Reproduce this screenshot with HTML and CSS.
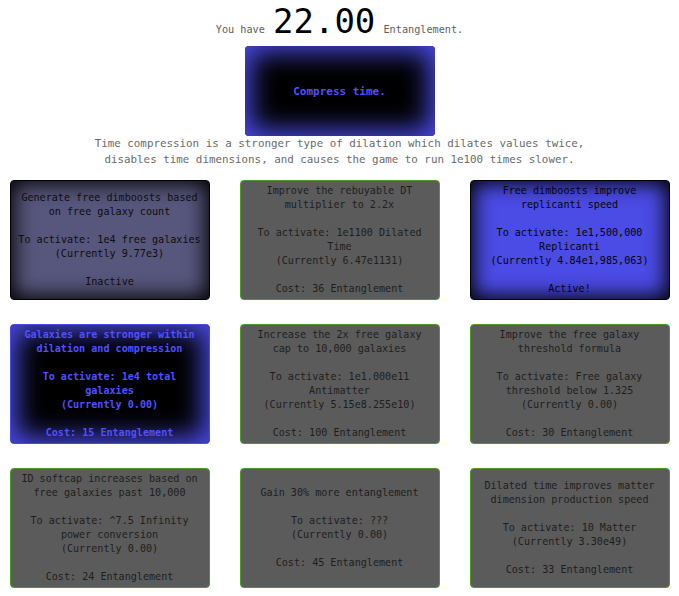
FILE: index.html
```html
<!DOCTYPE html>
<html>
<head>
<meta charset="utf-8">
<link rel="stylesheet" href="styles.css">
</head>
<body>
<div class="page">
  <div class="header">You have <span class="amount">22.00</span> Entanglement.</div>
  <button class="compress">Compress time.</button>
  <p class="desc">Time compression is a stronger type of dilation which dilates values twice,<br>disables time dimensions, and causes the game to run 1e100 times slower.</p>
  <div class="grid">
    <div class="card inactive">Generate free dimboosts based on free galaxy count<br><br>To activate: 1e4 free galaxies<br>(Currently 9.77e3)<br><br>Inactive</div>
    <div class="card locked">Improve the rebuyable DT multiplier to 2.2x<br><br>To activate: 1e1100 Dilated Time<br>(Currently 6.47e1131)<br><br>Cost: 36 Entanglement</div>
    <div class="card active">Free dimboosts improve replicanti speed<br><br>To activate: 1e1,500,000 Replicanti<br>(Currently 4.84e1,985,063)<br><br>Active!</div>
    <div class="card bought">Galaxies are stronger within dilation and compression<br><br>To activate: 1e4 total galaxies<br>(Currently 0.00)<br><br>Cost: 15 Entanglement</div>
    <div class="card locked">Increase the 2x free galaxy cap to 10,000 galaxies<br><br>To activate: 1e1.000e11 Antimatter<br>(Currently 5.15e8.255e10)<br><br>Cost: 100 Entanglement</div>
    <div class="card locked">Improve the free galaxy threshold formula<br><br>To activate: Free galaxy threshold below 1.325<br>(Currently 0.00)<br><br>Cost: 30 Entanglement</div>
    <div class="card locked">ID softcap increases based on free galaxies past 10,000<br><br>To activate: ^7.5 Infinity power conversion<br>(Currently 0.00)<br><br>Cost: 24 Entanglement</div>
    <div class="card locked">Gain 30% more entanglement<br><br>To activate: ???<br>(Currently 0.00)<br><br>Cost: 45 Entanglement</div>
    <div class="card locked">Dilated time improves matter dimension production speed<br><br>To activate: 10 Matter<br>(Currently 3.30e49)<br><br>Cost: 33 Entanglement</div>
  </div>
</div>
</body>
</html>
```
FILE: styles.css
```css
html, body {
  margin: 0;
  padding: 0;
  background: #ffffff;
}
.page {
  font-family: "DejaVu Sans Mono", "Liberation Mono", monospace;
  display: flex;
  flex-direction: column;
  align-items: center;
}
.header {
  padding-top: 4px;
  height: 34px;
  line-height: 34px;
  font-size: 10.2px;
  color: #5e5e5e;
  text-align: center;
}
.amount {
  font-size: 34px;
  color: #000;
  margin: 0 2px;
}
.compress {
  margin-top: 8px;
  width: 190px;
  height: 90px;
  border: none;
  border-radius: 4px;
  background: #000;
  box-shadow: inset 0 0 26px 6px #4b4be6;
  color: #5050ff;
  font-family: "DejaVu Sans Mono", "Liberation Mono", monospace;
  font-size: 11px;
  font-weight: bold;
  padding: 0;
}
.desc {
  margin: 0;
  font-size: 10.85px;
  line-height: 16px;
  color: #6a6a6a;
  text-align: center;
}
.grid {
  margin-top: 12px;
  display: grid;
  grid-template-columns: repeat(3, 200px);
  grid-auto-rows: 120px;
  column-gap: 30px;
  row-gap: 24px;
}
.card {
  box-sizing: border-box;
  border-radius: 4px;
  padding: 0 7px;
  display: flex;
  align-items: center;
  justify-content: center;
  text-align: center;
  font-size: 10.1px;
  line-height: 14px;
}
.locked {
  background: #5b5b5b;
  border: 1px solid #4f9a22;
  color: #1e1e1e;
}
.inactive {
  background: #57567c;
  border: 1px solid #000;
  box-shadow: inset 0 0 20px 3px #000;
  color: #0d0d0d;
}
.active {
  background: #4b4be6;
  border: 1px solid #000;
  box-shadow: inset 0 0 20px 3px #000;
  color: #050505;
}
.bought {
  background: #000;
  border: 1px solid #4b4be6;
  box-shadow: inset 0 0 26px 6px #4b4be6;
  color: #5050ff;
  font-weight: bold;
}
```
